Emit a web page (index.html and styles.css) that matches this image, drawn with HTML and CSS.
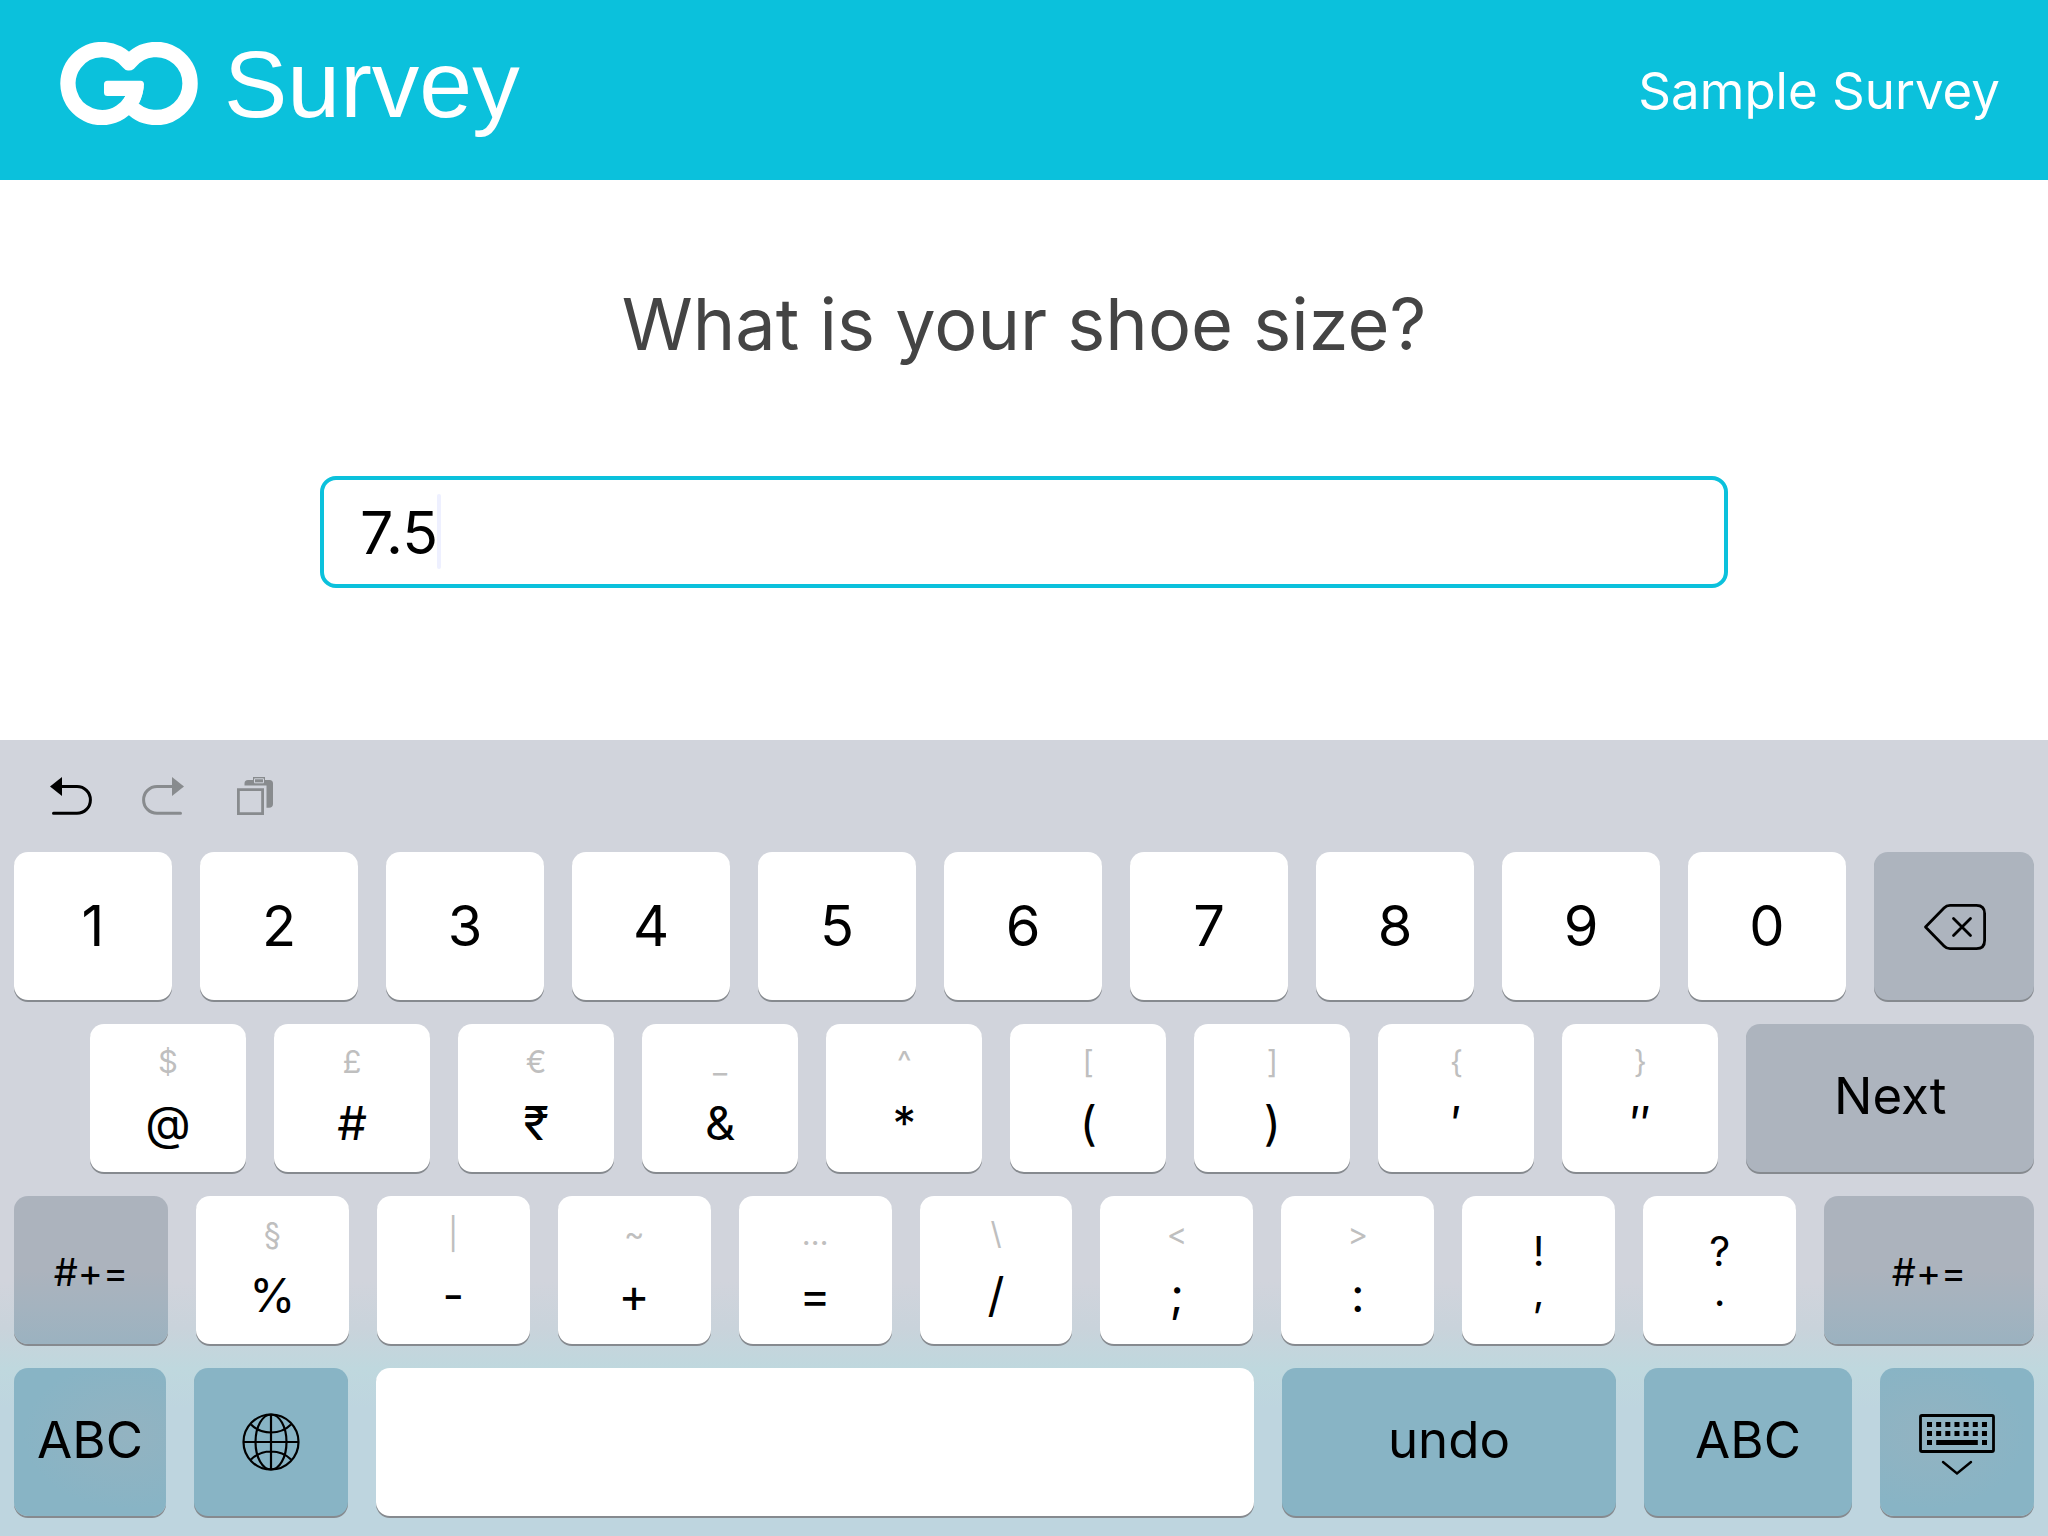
FILE: index.html
```html
<!DOCTYPE html>
<html lang="en">
<head>
<meta charset="utf-8">
<meta name="viewport" content="width=device-width, initial-scale=1">
<title>GO Survey</title>
<link rel="stylesheet" href="styles.css">
</head>
<body>
<header class="header">
  <div class="brand">
    <svg class="brand-mark" viewBox="0 0 138 83" role="img" aria-label="GO">
      <path d="M75.9 44A34 34 0 1 1 69 20.9A34 34 0 1 1 69 62.1" fill="none" stroke="#fff" stroke-width="15.4" stroke-linejoin="round"/>
      <path d="M47.500 38.700H80.500Q84 38.700 84 42.500Q83.500 52 79 61.500L64 56L66 54H47.500Q44 54 44 50.500V42.200Q44 38.700 47.500 38.700Z" fill="#fff"/>
    </svg>
    <span class="brand-name">Survey</span>
  </div>
  <span class="survey-title">Sample Survey</span>
</header>

<main class="question">
  <label class="question-text" for="answer">What is your shoe size?</label>
  <div class="answer">
    <input class="answer-input" id="answer" type="text" value="7.5">
    <span class="caret"></span>
  </div>
</main>

<section class="keyboard" aria-label="Keyboard">
  <div class="toolbar">
    <button class="tool" type="button" aria-label="Undo">
      <svg viewBox="0 0 42 38"><path d="M0 9.500L12 0V19Z" fill="currentColor"/><path d="M10 9.500H27A13.300 13.300 0 0 1 27 36.300H3.500" fill="none" stroke="currentColor" stroke-width="3" stroke-linecap="round"/></svg>
    </button>
    <button class="tool tool-off" type="button" aria-label="Redo">
      <svg viewBox="0 0 42 38"><path d="M42 9.500L30 0V19Z" fill="currentColor"/><path d="M32 9.500H15A13.300 13.300 0 0 0 15 36.300H38.500" fill="none" stroke="currentColor" stroke-width="3" stroke-linecap="round"/></svg>
    </button>
    <button class="tool tool-off" type="button" aria-label="Paste">
      <svg viewBox="0 0 42 38"><path d="M10.500 8.500V6.500Q10.500 3 14 3H19V0H31V3H35.500Q39 3 39 6.500V27Q39 30.700 35 30.700H32.500V8.500Z" fill="currentColor"/><path d="M20.500 5.800V1.800H29.500V5.800Z" fill="none" stroke="#d1d4dc" stroke-width="1"/><path d="M4.400 12.600H28.600V36.600H4.400Z" fill="none" stroke="currentColor" stroke-width="2.8"/></svg>
    </button>
  </div>

  <div class="row">
    <button class="key digit" type="button">1</button>
    <button class="key digit" type="button">2</button>
    <button class="key digit" type="button">3</button>
    <button class="key digit" type="button">4</button>
    <button class="key digit" type="button">5</button>
    <button class="key digit" type="button">6</button>
    <button class="key digit" type="button">7</button>
    <button class="key digit" type="button">8</button>
    <button class="key digit" type="button">9</button>
    <button class="key digit" type="button">0</button>
    <button class="key gray delete" type="button" aria-label="Delete">
      <svg class="icon-delete" viewBox="0 0 64 48"><path d="M3.500 24L22 5Q24.500 2.400 28 2.400H54.500Q62.600 2.400 62.600 10.500V37.500Q62.600 45.600 54.500 45.600H28Q24.500 45.600 22 43ZM31.500 15.500L48.500 32.500M48.500 15.500L31.500 32.500" fill="none" stroke="currentColor" stroke-width="2.8" stroke-linecap="round" stroke-linejoin="round"/></svg>
    </button>
  </div>

  <div class="row row-indent">
    <button class="key dual" type="button"><span class="alt">$</span><span>@</span></button>
    <button class="key dual" type="button"><span class="alt">£</span><span>#</span></button>
    <button class="key dual" type="button"><span class="alt">€</span><span>₹</span></button>
    <button class="key dual" type="button"><span class="alt">_</span><span>&amp;</span></button>
    <button class="key dual" type="button"><span class="alt">^</span><span>*</span></button>
    <button class="key dual" type="button"><span class="alt">[</span><span>(</span></button>
    <button class="key dual" type="button"><span class="alt">]</span><span>)</span></button>
    <button class="key dual" type="button"><span class="alt">{</span><span>′</span></button>
    <button class="key dual" type="button"><span class="alt">}</span><span>″</span></button>
    <button class="key gray word next" type="button">Next</button>
  </div>

  <div class="row">
    <button class="key fade symbols" type="button">#+=</button>
    <button class="key dual" type="button"><span class="alt">§</span><span>%</span></button>
    <button class="key dual" type="button"><span class="alt">|</span><span>-</span></button>
    <button class="key dual" type="button"><span class="alt">~</span><span>+</span></button>
    <button class="key dual" type="button"><span class="alt">…</span><span>=</span></button>
    <button class="key dual" type="button"><span class="alt">\</span><span>/</span></button>
    <button class="key dual" type="button"><span class="alt">&lt;</span><span>;</span></button>
    <button class="key dual" type="button"><span class="alt">&gt;</span><span>:</span></button>
    <button class="key pair" type="button"><span>!</span><span>,</span></button>
    <button class="key pair" type="button"><span>?</span><span>.</span></button>
    <button class="key fade symbols symbols-wide" type="button">#+=</button>
  </div>

  <div class="row">
    <button class="key teal glow-right word abc-left" type="button">ABC</button>
    <button class="key teal" type="button" aria-label="Next keyboard">
      <svg class="icon-globe" viewBox="0 0 58 58"><g fill="none" stroke="currentColor" stroke-width="2.200"><circle cx="29" cy="29" r="27.500"/><ellipse cx="29" cy="29" rx="15.500" ry="27.500"/><path d="M29 1.500V56.500M1.500 29H56.500M9 11.500Q17 19.500 29 19.500T49 11.500M9 46.500Q17 38.500 29 38.500T49 46.500"/></g></svg>
    </button>
    <button class="key space" type="button" aria-label="Space"></button>
    <button class="key teal word undo" type="button">undo</button>
    <button class="key teal word abc-right" type="button">ABC</button>
    <button class="key teal glow-left hide" type="button" aria-label="Hide keyboard">
      <svg class="icon-hide" viewBox="0 0 76 62"><rect x="1.500" y="1.500" width="73" height="36" rx="1.500" fill="none" stroke="currentColor" stroke-width="2.800"/><path d="M8 10.500H68M8 19.500H68" stroke="currentColor" stroke-width="5" stroke-dasharray="5 4.160"/><path d="M8 28.500H13M17.200 28.500H58.800M63 28.500H68" stroke="currentColor" stroke-width="5"/><path d="M24 48L38 59.500L52 48" fill="none" stroke="currentColor" stroke-width="2.400" stroke-linecap="round"/></svg>
    </button>
  </div>
</section>
</body>
</html>
```
FILE: styles.css
```css
* {
  box-sizing: border-box;
}

body {
  margin: 0;
  min-height: 100vh;
  display: flex;
  flex-direction: column;
  background: #fff;
  font-family: Inter, "Liberation Sans", sans-serif;
}

.header {
  display: flex;
  justify-content: space-between;
  align-items: center;
  height: 180px;
  padding: 0 48px 0 60px;
  background: #0bc1dc;
  color: #fff;
}

.brand {
  display: flex;
  align-items: center;
  gap: 26px;
  padding-bottom: 14px;
}

.brand-mark {
  width: 138px;
  height: 83px;
}

.brand-name {
  padding-top: 2px;
  font-family: "Liberation Sans", sans-serif;
  font-size: 95px;
  line-height: 100px;
}

.survey-title {
  padding-top: 2px;
  font-size: 51px;
  line-height: 64px;
}

.question {
  flex: 1;
  display: flex;
  flex-direction: column;
  align-items: center;
  gap: 104px;
  padding: 96px 48px;
}

.question-text {
  color: #444;
  font-size: 72px;
  line-height: 96px;
}

.answer {
  position: relative;
  width: 100%;
  max-width: 1408px;
}

.answer-input {
  display: block;
  width: 100%;
  height: 112px;
  padding: 0 36px;
  border: 4px solid #0bc1dc;
  border-radius: 16px;
  background: #fff;
  color: #000;
  font-family: inherit;
  font-size: 59px;
  outline: none;
}

/* Insertion point, drawn over the field just after the value */
.caret {
  position: absolute;
  left: 117px;
  top: 18px;
  width: 4px;
  height: 75px;
  border-radius: 2px;
  background: #eef0ff;
}

.keyboard {
  display: flex;
  flex-direction: column;
  gap: 24px;
  padding: 0 14px 20px;
  background: linear-gradient(#d1d4dc 0 68%, #c9d3db 74%, #bfd8de 79%, #bed5df 84%);
}

.toolbar {
  display: flex;
  align-items: center;
  gap: 50px;
  height: 88px;
  padding: 23px 36px 0;
}

.tool {
  width: 42px;
  height: 38px;
  padding: 0;
  border: 0;
  background: none;
  color: #000;
}

.tool svg {
  display: block;
  width: 42px;
  height: 38px;
}

.tool-off {
  color: #888b8e;
}

.row {
  display: flex;
  gap: 28px;
}

.row-indent {
  padding-left: 76px;
}

.key {
  flex: 154 1 0;
  min-width: 0;
  height: 148px;
  display: flex;
  align-items: center;
  justify-content: center;
  padding: 0;
  border: 0;
  border-radius: 14px;
  background: #fff;
  box-shadow: 0 2px 0 #868a8f;
  color: #000;
  font-family: inherit;
}

.digit {
  font-size: 56px;
}

.dual {
  flex-grow: 153;
  flex-direction: column;
  justify-content: flex-start;
  gap: 16px;
  padding-top: 20px;
  font-size: 47px;
  line-height: 54px;
}

.alt {
  color: #bfbfbf;
  font-size: 31px;
  line-height: 36px;
}

.pair {
  flex-grow: 153;
  flex-direction: column;
  padding-top: 2px;
  font-size: 41px;
  line-height: 40px;
}

.word {
  padding-bottom: 6px;
  font-size: 51px;
}

.symbols {
  padding-top: 4px;
  font-size: 38px;
}

.gray {
  background: #adb4be;
}

.fade {
  background: linear-gradient(#acb3bd 50%, #a4b3bf 75%, #9bb2c0);
}

.teal {
  background: #88b4c5;
}

.glow-right {
  background: radial-gradient(ellipse at 75% 45%, #93b3c1, #88b4c5 65%);
}

.glow-left {
  background: radial-gradient(ellipse at 32% 45%, #93b3c1, #88b4c5 65%);
}

.delete {
  flex-grow: 156;
  padding-top: 2px;
}

.next {
  flex-grow: 282;
}

.symbols-wide {
  flex-grow: 210;
}

.abc-left {
  flex-grow: 152;
}

.space {
  flex-grow: 878;
}

.undo {
  flex-grow: 334;
}

.abc-right {
  flex-grow: 208;
}

.hide {
  padding-top: 6px;
}

.icon-delete {
  width: 64px;
  height: 48px;
}

.icon-globe {
  width: 58px;
  height: 58px;
}

.icon-hide {
  width: 76px;
  height: 62px;
}
```
